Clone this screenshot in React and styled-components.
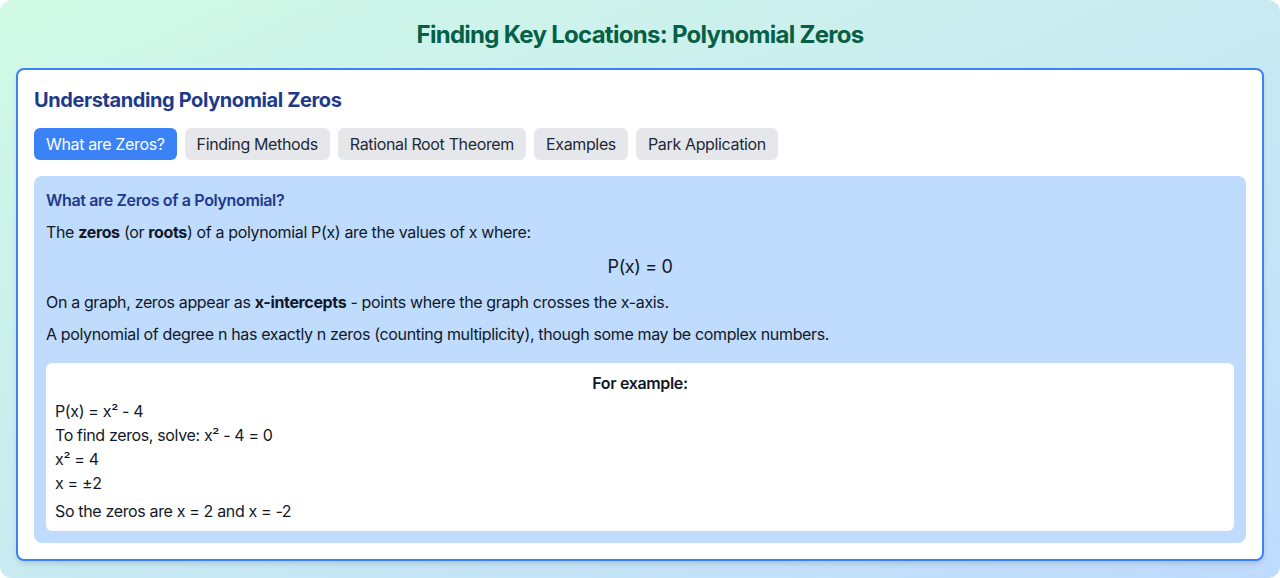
import React, { useState } from 'react';
import styled, { createGlobalStyle } from 'styled-components';

const tabs = [
  'What are Zeros?',
  'Finding Methods',
  'Rational Root Theorem',
  'Examples',
  'Park Application',
];

const App = () => {
  const [active, setActive] = useState(0);

  return (
    <>
      <GlobalStyle />
      <Page>
        <Title>Finding Key Locations: Polynomial Zeros</Title>
        <Card>
          <CardHeading>Understanding Polynomial Zeros</CardHeading>
          <TabRow>
            {tabs.map((tab, i) => (
              <TabButton key={tab} $active={i === active} onClick={() => setActive(i)}>
                {tab}
              </TabButton>
            ))}
          </TabRow>
          <Panel>
            <PanelTitle>What are Zeros of a Polynomial?</PanelTitle>
            <Text>
              The <b>zeros</b> (or <b>roots</b>) of a polynomial P(x) are the values of x where:
            </Text>
            <Formula>P(x) = 0</Formula>
            <Text>
              On a graph, zeros appear as <b>x-intercepts</b> - points where the graph crosses the x-axis.
            </Text>
            <Text>
              A polynomial of degree n has exactly n zeros (counting multiplicity), though some may be complex numbers.
            </Text>
            <ExampleBox>
              <ExampleTitle>For example:</ExampleTitle>
              <ExampleLine>P(x) = x² - 4</ExampleLine>
              <ExampleLine>To find zeros, solve: x² - 4 = 0</ExampleLine>
              <ExampleLine>x² = 4</ExampleLine>
              <ExampleLine>x = ±2</ExampleLine>
              <ExampleResult>So the zeros are x = 2 and x = -2</ExampleResult>
            </ExampleBox>
          </Panel>
        </Card>
      </Page>
    </>
  );
};

export default App;

const GlobalStyle = createGlobalStyle`
  body {
    margin: 0;
    background: #ffffff;
    font-family: Inter, "Noto Sans", sans-serif;
    letter-spacing: -0.022em;
    color: #111827;
  }
`;

const Page = styled.div`
  min-height: 100vh;
  box-sizing: border-box;
  padding: 19px 16px 16px;
  border-radius: 12px;
  background: linear-gradient(to bottom right, #d1fae5, #bfdbfe);
`;

const Title = styled.h1`
  margin: 0 0 17px;
  text-align: center;
  font-size: 24px;
  line-height: 32px;
  font-weight: 700;
  letter-spacing: -0.03em;
  color: #065f46;
`;

const Card = styled.div`
  background: #ffffff;
  border: 2px solid #3b82f6;
  border-radius: 8px;
  padding: 16px;
  box-shadow: 0 4px 6px -1px rgba(0, 0, 0, 0.1), 0 2px 4px -2px rgba(0, 0, 0, 0.1);
`;

const CardHeading = styled.h2`
  margin: 0 0 14px;
  font-size: 20px;
  line-height: 28px;
  font-weight: 700;
  letter-spacing: -0.02em;
  color: #1e3a8a;
`;

const TabRow = styled.div`
  display: flex;
  flex-wrap: wrap;
  gap: 8px;
  margin-bottom: 16px;
`;

const TabButton = styled.button`
  border: none;
  border-radius: 6px;
  padding: 4px 12px;
  font-family: inherit;
  font-size: 16px;
  line-height: 24px;
  letter-spacing: inherit;
  cursor: pointer;
  background: ${(p) => (p.$active ? '#3b82f6' : '#e5e7eb')};
  color: ${(p) => (p.$active ? '#ffffff' : '#1f2937')};
`;

const Panel = styled.div`
  background: #bfdbfe;
  border-radius: 8px;
  padding: 12px;
`;

const PanelTitle = styled.h3`
  margin: 0 0 8px;
  font-size: 16px;
  line-height: 24px;
  font-weight: 600;
  color: #1e3a8a;
`;

const Text = styled.p`
  margin: 0 0 8px;
  font-size: 16px;
  line-height: 24px;
`;

const Formula = styled.div`
  margin: 0 0 8px;
  text-align: center;
  font-size: 18px;
  line-height: 30px;
`;

const ExampleBox = styled.div`
  margin-top: 17px;
  background: #ffffff;
  border-radius: 6px;
  padding: 8px 9px;
`;

const ExampleTitle = styled.div`
  margin-bottom: 4px;
  text-align: center;
  font-weight: 600;
  font-size: 16px;
  line-height: 24px;
`;

const ExampleLine = styled.div`
  font-size: 16px;
  line-height: 24px;
`;

const ExampleResult = styled(ExampleLine)`
  margin-top: 4px;
`;
